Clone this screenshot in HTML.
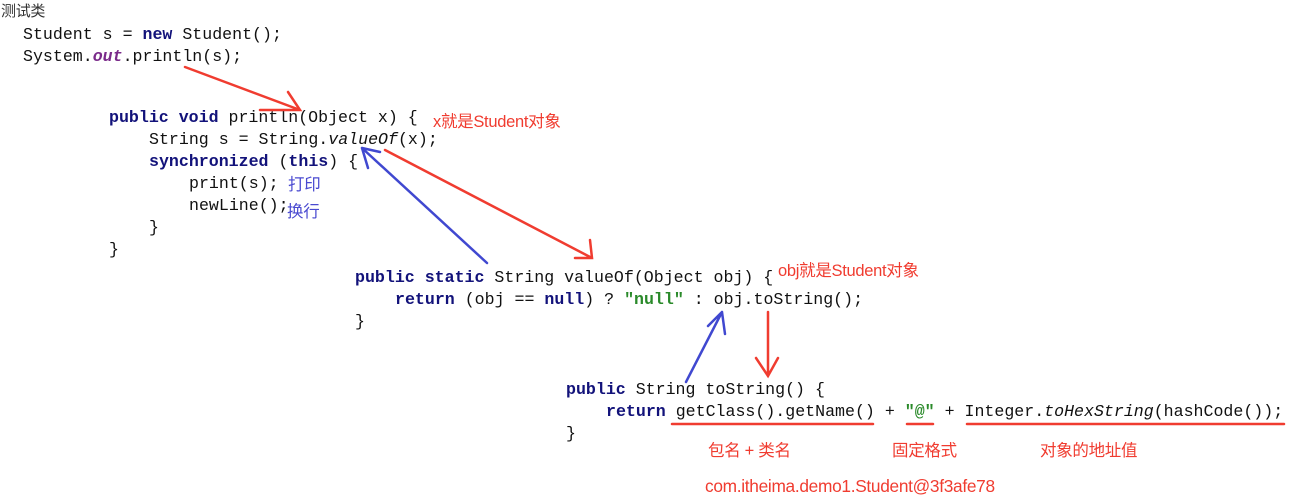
<!DOCTYPE html><html><head><meta charset="utf-8"><style>
body{margin:0;width:1293px;height:499px;background:#fff;position:relative;overflow:hidden}
.c{position:absolute;font-family:"Liberation Mono",monospace;font-size:16.6px;color:#111;white-space:pre;line-height:22px}
.k{color:#12127a;font-weight:bold}
.s{color:#2a8a2a;font-weight:bold}
.i{font-style:italic}
.p{color:#7a2a8a;font-style:italic;font-weight:bold}
.a{position:absolute;font-family:"Liberation Sans","Noto Sans CJK SC",sans-serif;font-size:16.5px;color:#f03c30;white-space:pre;line-height:18px;letter-spacing:-0.3px}
.b{color:#4a4ad0}
</style></head><body>
<div class="a" style="left:1px;top:3px;color:#333;font-size:15px">测试类</div>
<div class="c" style="left:23px;top:24px">Student s = <span class="k">new</span> Student();</div>
<div class="c" style="left:23px;top:46px">System.<span class="p">out</span>.println(s);</div>

<div class="c" style="left:109px;top:107px"><span class="k">public void</span> println(Object x) {</div>
<div class="c" style="left:149px;top:129px">String s = String.<span class="i">valueOf</span>(x);</div>
<div class="c" style="left:149px;top:151px"><span class="k">synchronized</span> (<span class="k">this</span>) {</div>
<div class="c" style="left:189px;top:173px">print(s);</div>
<div class="c" style="left:189px;top:195px">newLine();</div>
<div class="c" style="left:149px;top:217px">}</div>
<div class="c" style="left:109px;top:239px">}</div>

<div class="c" style="left:355px;top:267px"><span class="k">public static</span> String valueOf(Object obj) {</div>
<div class="c" style="left:395px;top:289px"><span class="k">return</span> (obj == <span class="k">null</span>) ? <span class="s">"null"</span> : obj.toString();</div>
<div class="c" style="left:355px;top:311px">}</div>

<div class="c" style="left:566px;top:379px"><span class="k">public</span> String toString() {</div>
<div class="c" style="left:606px;top:401px"><span class="k">return</span> getClass().getName() + <span class="s">"@"</span> + Integer.<span class="i">toHexString</span>(hashCode());</div>
<div class="c" style="left:566px;top:423px">}</div>

<div class="a" style="left:433px;top:113px">x就是Student对象</div>
<div class="a b" style="left:288px;top:176px">打印</div>
<div class="a b" style="left:287px;top:203px">换行</div>
<div class="a" style="left:778px;top:262px">obj就是Student对象</div>
<div class="a" style="left:708px;top:442px">包名 + 类名</div>
<div class="a" style="left:892px;top:442px">固定格式</div>
<div class="a" style="left:1040px;top:442px">对象的地址值</div>
<div class="a" style="left:705px;top:477px;font-size:17.3px">com.itheima.demo1.Student@3f3afe78</div>

<svg width="1293" height="499" style="position:absolute;left:0;top:0" fill="none" stroke-width="2.5" stroke-linecap="round">
<g stroke="#f03c30">
<path d="M185 67 L300 110 M260 110 L300 110 L288 92"/>
<path d="M385 150 L592 258 M575 258 L592 258 L590 240"/>
<path d="M768 312 L768 376 M756 358 L768 376 L778 358"/>
<path d="M672 424 L873 424 M907 424 L933 424 M967 424 L1284 424"/>
</g>
<g stroke="#4048d0">
<path d="M487 263 L362 148 M362 148 L368 168 M362 148 L380 152"/>
<path d="M686 382 L722 312 M722 312 L725 334 M722 312 L708 326"/>
</g>
</svg>
</body></html>
